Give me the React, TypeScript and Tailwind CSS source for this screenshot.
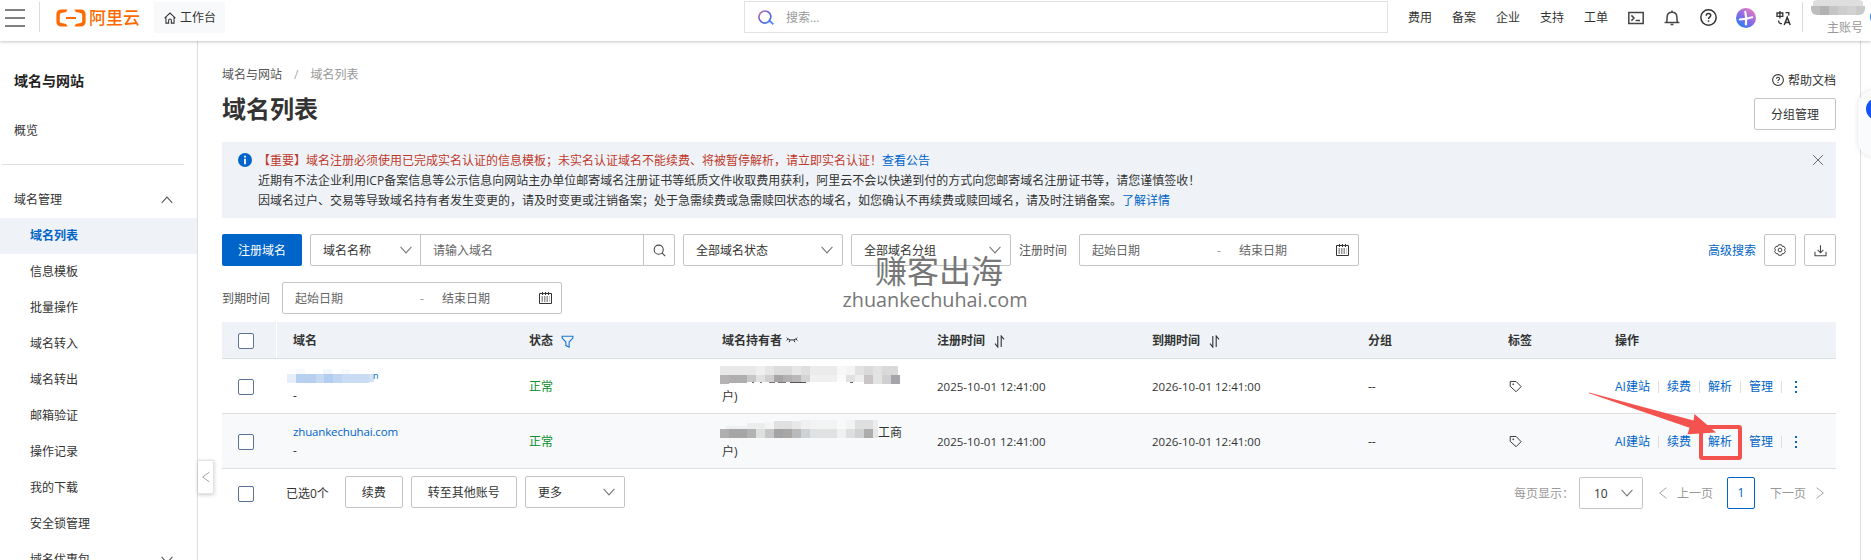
import type { ReactNode } from 'react';

const navLinks = ['费用', '备案', '企业', '支持', '工单'];

const sideItems = [
  '域名列表',
  '信息模板',
  '批量操作',
  '域名转入',
  '域名转出',
  '邮箱验证',
  '操作记录',
  '我的下载',
  '安全锁管理',
];

const rowActions = ['AI建站', '续费', '解析', '管理'];

const tableCols = 'grid grid-cols-[55px_236px_193px_215px_215px_216px_140px_107px_1fr] items-center [&>*]:pt-[2px]';

type Block = [x: number, y: number, w: number, h: number, fill: string];

// Pixelated strips that hide private values
const domainMask: Block[] = [
  [9, 0, 9, 5, '#f6f9fd'],
  [36, 0, 9, 5, '#f3f7fc'],
  [54, 0, 9, 5, '#f6f9fd'],
  [0, 5, 9, 9, '#e6eefa'],
  [9, 5, 20, 9, '#b8d0f0'],
  [29, 5, 8, 9, '#c6d9f2'],
  [37, 5, 9, 9, '#b2cdf0'],
  [46, 5, 9, 9, '#bfd5f2'],
  [55, 5, 27, 9, '#c9dcf4'],
  [82, 5, 5, 8, '#d2e2f6'],
];

const ownerMaskA: Block[] = [
  [0, 2, 36, 9, '#e8e8e8'],
  [36, 2, 9, 9, '#efefef'],
  [45, 2, 9, 9, '#e6e6e6'],
  [54, 2, 18, 9, '#dcdcdc'],
  [72, 2, 9, 9, '#e6e6e6'],
  [81, 2, 9, 9, '#dedede'],
  [90, 2, 27, 9, '#ebebeb'],
  [117, 2, 9, 9, '#f7f7f7'],
  [126, 2, 9, 9, '#f4f4f4'],
  [135, 2, 9, 9, '#e2e2e2'],
  [144, 2, 9, 9, '#dadada'],
  [153, 2, 9, 9, '#e2e2e2'],
  [162, 2, 16, 9, '#d9d9d9'],
  [0, 11, 9, 9, '#b5b3b3'],
  [9, 11, 18, 8, '#b0afb0'],
  [27, 11, 9, 7, '#c8c6c6'],
  [36, 11, 9, 7, '#e2e2e2'],
  [45, 11, 9, 7, '#cfcfcf'],
  [54, 11, 9, 7, '#a7a5a6'],
  [63, 11, 9, 7, '#b2b0b0'],
  [72, 11, 9, 7, '#bab8b8'],
  [81, 11, 9, 7, '#d5d4d4'],
  [90, 11, 27, 7, '#f0f0f0'],
  [117, 11, 9, 6, '#fafafa'],
  [126, 11, 9, 7, '#e4e2e0'],
  [135, 11, 9, 7, '#eeeeee'],
  [144, 11, 9, 9, '#c9c5c6'],
  [153, 11, 9, 9, '#e3e3e3'],
  [162, 11, 9, 9, '#d0cfd1'],
  [171, 11, 9, 9, '#a6a5a9'],
  // stroke ends left below the strip
  [32, 18, 2, 1, '#666666'],
  [40, 18, 2, 1, '#777777'],
  [49, 18, 6, 1, '#777777'],
  [58, 18, 8, 1, '#777777'],
  [70, 18, 16, 1, '#555555'],
  [130, 18, 3, 1, '#666666'],
];

const ownerMaskB: Block[] = [
  [6, 8, 21, 3, '#eff0f1'],
  [27, 5, 18, 6, '#eceded'],
  [45, 4, 9, 7, '#f3f4f4'],
  [54, 3, 18, 8, '#e0e0e0'],
  [72, 3, 9, 8, '#e8e8e8'],
  [81, 2, 9, 9, '#f0f0f0'],
  [90, 2, 27, 9, '#f2f3f3'],
  [126, 2, 9, 9, '#f2f3f3'],
  [135, 2, 18, 9, '#dedfdf'],
  [153, 2, 5, 9, '#eceded'],
  [0, 11, 9, 9, '#b0aeae'],
  [9, 11, 18, 9, '#a6a6a7'],
  [27, 11, 9, 9, '#b3b2b2'],
  [36, 11, 9, 9, '#dedfdf'],
  [45, 11, 9, 9, '#c6c6c8'],
  [54, 11, 9, 9, '#a3a3a5'],
  [63, 11, 9, 9, '#a9a6a6'],
  [72, 11, 9, 9, '#b9babb'],
  [81, 11, 9, 9, '#cfd2d4'],
  [90, 11, 27, 9, '#dfe1e2'],
  [117, 11, 9, 9, '#eff0f0'],
  [126, 11, 9, 9, '#dddede'],
  [135, 11, 9, 9, '#d0d1d2'],
  [144, 11, 9, 9, '#adabab'],
  [153, 11, 5, 9, '#e6e7e8'],
];

const accountMask: Block[] = [
  [2, 0, 50, 6, '#dedede'],
  [0, 6, 9, 9, '#bdbdbd'],
  [9, 6, 9, 9, '#b2b2b4'],
  [18, 6, 9, 9, '#c5c5c5'],
  [27, 6, 9, 9, '#cdcdcd'],
  [36, 6, 9, 9, '#d2d2d2'],
  [45, 6, 9, 9, '#cacaca'],
];

function Mask({ blocks, w, h, className = '' }: { blocks: Block[]; w: number; h: number; className?: string }) {
  return (
    <svg width={w} height={h} className={`shrink-0 ${className}`} shapeRendering="crispEdges" aria-hidden="true">
      {blocks.map(([x, y, bw, bh, fill], i) => (
        <rect key={i} x={x} y={y} width={bw} height={bh} fill={fill} />
      ))}
    </svg>
  );
}

function Icon({
  size = 16,
  sw = 1.2,
  className = '',
  children,
}: {
  size?: number;
  sw?: number;
  className?: string;
  children: ReactNode;
}) {
  return (
    <svg
      width={size}
      height={size}
      viewBox="0 0 16 16"
      fill="none"
      stroke="currentColor"
      strokeWidth={sw}
      className={`shrink-0 ${className}`}
      aria-hidden="true"
    >
      {children}
    </svg>
  );
}

function ChevronDown({ className = '' }: { className?: string }) {
  return (
    <Icon size={14} className={className}>
      <path d="M1.8 4.5 8 11.3l6.2-6.8" />
    </Icon>
  );
}

function HelpIcon({ size }: { size: number }) {
  return (
    <Icon size={size} sw={1.4}>
      <circle cx="8" cy="8" r="7.2" />
      <path d="M5.9 6.4c0-1.3.9-2.1 2.1-2.1s2.1.8 2.1 1.9c0 1.4-2.1 1.6-2.1 3.2M8 10.7v1.4" />
    </Icon>
  );
}

function SortIcon() {
  return (
    <svg width="11" height="13" viewBox="0 0 11 13" fill="none" stroke="#333" strokeWidth="1.1" className="ml-[9px]" aria-hidden="true">
      <path d="M3.8 1v11L1 8.6M7.2 12V1L10 4.4" />
    </svg>
  );
}

function Checkbox() {
  return <span className="block size-4 rounded-[2px] border border-[#5b7495] bg-white" />;
}

function Select({ label, width }: { label: string; width: string }) {
  return (
    <div className={`flex h-8 shrink-0 items-center justify-between rounded-[2px] border border-[#c3c5c6] bg-white pl-3 pr-2 ${width}`}>
      <span className="pt-[2px]">{label}</span>
      <ChevronDown className="text-[#777]" />
    </div>
  );
}

function DateRange() {
  return (
    <div className="flex h-8 w-[280px] items-center rounded-[2px] border border-[#c3c5c6] bg-white pl-3 text-[#666]">
      <span className="w-[125px] pt-[2px]">起始日期</span>
      <span className="w-[22px] pt-[2px] text-[#999]">-</span>
      <span className="pt-[2px]">结束日期</span>
      <svg width="13" height="13" viewBox="0 0 13 13" className="ml-auto mr-[9px] text-[#333]" aria-hidden="true">
        <path d="M.5 1.5h12v10H.5zM3.5 0v3M6.5 0v3M9.5 0v3" fill="none" stroke="currentColor" />
        <path d="M2.5 5h8M2.500 7h8M2.500 9h8" stroke="currentColor" strokeWidth="1" strokeDasharray="1.500 1" />
      </svg>
    </div>
  );
}

function Header() {
  return (
    <header className="relative z-10 flex h-[41px] shrink-0 bg-white pb-[6px] shadow-[0_1px_3px_rgba(0,0,0,0.22)]">
      <div className="ml-[5px] flex w-5 flex-col justify-center gap-[6px]">
        <span className="h-[2px] bg-[#808080]" />
        <span className="h-[2px] bg-[#808080]" />
        <span className="h-[2px] bg-[#808080]" />
      </div>
      <div className="ml-[14px] mt-[2px] h-[30px] w-px bg-[#dcdcdc]" />

      {/* Logo */}
      <div className="ml-4 flex items-center text-[#ff6a00]">
        <svg width="30" height="18" viewBox="0 0 30 18" fill="none" aria-hidden="true">
          <path d="M11.6.4H5.2C2.4.4.4 2.3.4 5v8c0 2.7 2 4.6 4.8 4.6h6.4l-1.5-2.7-4.7-.9c-1-.2-1.6-.9-1.6-1.8V5.8c0-.9.6-1.6 1.6-1.8l4.7-.9z" fill="currentColor" />
          <path d="M18.4.4h6.4c2.8 0 4.8 1.9 4.8 4.6v8c0 2.7-2 4.6-4.8 4.6h-6.4l1.5-2.7 4.7-.9c1-.2 1.6-.9 1.6-1.8V5.8c0-.9-.6-1.6-1.6-1.8l-4.7-.9z" fill="currentColor" />
          <path d="M10 8h10v2H10z" fill="currentColor" />
        </svg>
        <span className="ml-[3px] text-[17px] font-medium leading-none">阿里云</span>
      </div>

      <div className="ml-[14px] mt-[2px] flex h-[31px] w-[71px] items-center bg-[#f7f9fa] pl-[10px]">
        <Icon size={12} sw={1.4}>
          <path d="M.8 8.2 8 1.4l7.2 6.8M2.6 7v7.8h3.6V11c0-1 .8-1.8 1.8-1.8s1.8.8 1.8 1.8v3.8h3.6V7" />
        </Icon>
        <span className="ml-1">工作台</span>
      </div>

      <div className="ml-auto mt-px flex h-8 w-[644px] items-center border border-[#dfe2e5] pl-[13px] text-[#999]">
        <svg width="16" height="16" viewBox="0 0 16 16" fill="none" aria-hidden="true">
          <defs>
            <linearGradient id="searchStroke" x1="0" y1="0" x2="1" y2="1">
              <stop offset="0" stopColor="#d0709a" />
              <stop offset="0.45" stopColor="#5a5fe0" />
              <stop offset="1" stopColor="#3f8cff" />
            </linearGradient>
          </defs>
          <path d="M11.8 11.6A6 6 0 1 1 12.9 7.2c0 1.7-.5 3.2-1.6 4.2l4 4" stroke="url(#searchStroke)" strokeWidth="1.7" />
        </svg>
        <span className="ml-3 pt-px">搜索...</span>
      </div>

      <nav className="ml-5 flex items-center gap-5 text-[#333]">
        {navLinks.map((link) => (
          <a key={link} href="#">
            {link}
          </a>
        ))}
        <Icon sw={1.5} className="text-[#444]">
          <path d="M.8 2.6h14.4v10.8H.8zM3.4 5.4 6 8l-2.6 2.6M7.6 10.6H12" />
        </Icon>
        <Icon sw={1.5} className="text-[#444]">
          <path d="M.6 12.6h14.8M2.4 12.4c.7-1 .7-2.4.7-5C3.1 4.3 5 2.2 8 2.2s4.9 2.1 4.9 5.2c0 2.6 0 4 .7 5M6.6 14.6h2.8M8 .6v1.6" />
        </Icon>
        <HelpIcon size={17} />
        <svg width="20" height="20" viewBox="0 0 20 20" className="-ml-px" aria-hidden="true">
          <defs>
            <linearGradient id="copilot" x1="0.2" y1="0.9" x2="0.8" y2="0.1">
              <stop offset="0" stopColor="#2f7cf6" />
              <stop offset="0.5" stopColor="#8d6ae8" />
              <stop offset="1" stopColor="#e07ac0" />
            </linearGradient>
          </defs>
          <circle cx="10" cy="10" r="10" fill="url(#copilot)" />
          <path d="M9.3 3.8c.9 3.6 1 8.8.6 12.6" stroke="#fff" strokeWidth="2.2" strokeLinecap="round" fill="none" />
          <path d="M3.8 11.4c3.2-.2 8.4-1 12.4-2.2" stroke="#fff" strokeWidth="2" strokeLinecap="round" fill="none" />
        </svg>
        <Icon sw={1.3}>
          <path d="M1 3h5.8v3.4H1zM3.9 1v7.6M9.6 2.6h3.2v3M2.6 10.4c0 2 .8 3.3 3.4 3.3" />
          <path d="m8.2 15 3-7.6 3 7.6M9.3 12.6h3.9" strokeWidth="1.5" />
        </Icon>
      </nav>

      <div className="ml-[10px] mt-[2px] h-[30px] w-px bg-[#dcdcdc]" />
      <div className="ml-2 mr-[6px] flex w-[54px] flex-col items-end">
        <Mask blocks={accountMask} w={54} h={15} className="rounded-[6px]" />
        <span className="mr-[2px] mt-[4px] leading-[18px] text-[#999]">主账号</span>
      </div>
    </header>
  );
}

function Sidebar() {
  return (
    <aside className="relative w-[198px] shrink-0 border-r border-[#dcdee0]">
      <h2 className="pl-[14px] pt-[30px] text-sm font-bold leading-5 text-[#222]">域名与网站</h2>
      <a href="#" className="mt-[30px] block pl-[14px] leading-5">
        概览
      </a>
      <div className="ml-[2px] mr-[13px] mt-[23px] h-px bg-[#dcdee0]" />
      <div className="mt-[17px] flex h-9 items-center justify-between pl-[14px] pr-[23px]">
        <span>域名管理</span>
        <Icon size={14} className="text-[#555]">
          <path d="m2 11.2 6-6.6 6 6.6" />
        </Icon>
      </div>
      <ul>
        {sideItems.map((item, i) => (
          <li
            key={item}
            className={`flex h-9 items-center pl-[30px] ${i === 0 ? 'bg-[#eff3f8] font-bold text-[#0064c8]' : ''}`}
          >
            {item}
          </li>
        ))}
        <li className="flex h-9 items-center justify-between pl-[30px] pr-[23px]">
          域名优惠包
          <ChevronDown className="text-[#555]" />
        </li>
      </ul>

      {/* Collapse handle */}
      <button className="absolute left-[198px] top-[419px] flex h-[34px] w-4 items-center justify-center border border-l-0 border-[#e3e4e6] bg-white text-[#999] shadow-[0_1px_4px_rgba(0,0,0,0.2)]">
        <Icon size={12}>
          <path d="M12.5 1.5 3.5 8l9 6.5" />
        </Icon>
      </button>
    </aside>
  );
}

function Notice() {
  return (
    <section className="mt-[13px] flex h-[76px] bg-[#eff3f8] pl-4 pr-3 pt-[9px] text-[#333]">
      <svg width="14" height="14" viewBox="0 0 14 14" className="mt-[2px] shrink-0" aria-hidden="true">
        <circle cx="7" cy="7" r="7" fill="#0064c8" />
        <path d="M7 2.7v1.7M7 5.7v5.5" stroke="#fff" strokeWidth="1.8" />
      </svg>
      <div className="ml-[6px] leading-5">
        <p className="text-[#c03a2b]">
          【重要】域名注册必须使用已完成实名认证的信息模板；未实名认证域名不能续费、将被暂停解析，请立即实名认证！
          <a href="#" className="text-[#0064c8]">查看公告</a>
        </p>
        <p>近期有不法企业利用ICP备案信息等公示信息向网站主办单位邮寄域名注册证书等纸质文件收取费用获利，阿里云不会以快递到付的方式向您邮寄域名注册证书等，请您谨慎签收！</p>
        <p>
          因域名过户、交易等导致域名持有者发生变更的，请及时变更或注销备案；处于急需续费或急需赎回状态的域名，如您确认不再续费或赎回域名，请及时注销备案。
          <a href="#" className="text-[#0064c8]">了解详情</a>
        </p>
      </div>
      <Icon size={12} sw={1.3} className="ml-auto mt-[3px] text-[#666]">
        <path d="m1.5 1.5 13 13M14.5 1.5l-13 13" />
      </Icon>
    </section>
  );
}

function Toolbar() {
  return (
    <div className="mt-4">
      <div className="flex h-8 items-center">
        <button className="h-8 w-20 rounded-[2px] bg-[#0064c8] pt-[2px] text-white">注册域名</button>
        <div className="ml-2 flex h-8 w-[365px] rounded-[2px] border border-[#c3c5c6]">
          <div className="flex w-[110px] items-center justify-between border-r border-[#c3c5c6] pl-3 pr-[7px]">
            <span className="pt-[2px]">域名名称</span>
            <ChevronDown className="text-[#777]" />
          </div>
          <span className="flex flex-1 items-center pl-3 pt-[2px] text-[#666]">请输入域名</span>
          <span className="flex w-[31px] items-center justify-center border-l border-[#c3c5c6]">
            <Icon size={13} sw={1.3} className="text-[#444]">
              <circle cx="7" cy="7" r="5.6" />
              <path d="m11 11 4 4" />
            </Icon>
          </span>
        </div>
        <div className="ml-2 flex gap-2">
          <Select label="全部域名状态" width="w-[160px]" />
          <Select label="全部域名分组" width="w-[160px]" />
        </div>
        <span className="ml-2 mr-3 pt-[2px] text-[#555]">注册时间</span>
        <DateRange />
        <a href="#" className="ml-auto pt-[2px] text-[#0064c8]">
          高级搜索
        </a>
        <button className="ml-2 flex size-8 items-center justify-center rounded-[2px] border border-[#c3c5c6]">
          <Icon size={12} sw={1.2}>
            <path d="M6 1h4l.9 2.200 2.400-.1 1.900 3.200L13.900 8l1.300 1.700-1.900 3.200-2.400-.1L10 15H6l-.9-2.200-2.400.1L.8 9.700 2.100 8 .8 6.300l1.900-3.200 2.400.1z" />
            <circle cx="8" cy="8" r="2.5" />
          </Icon>
        </button>
        <button className="ml-2 flex size-8 items-center justify-center rounded-[2px] border border-[#c3c5c6]">
          <Icon size={13} sw={1.3} className="text-[#444]">
            <path d="M8 1.5v9M4.5 7.3 8 10.8l3.5-3.5M1.2 9.5v5h13.6v-5" />
          </Icon>
        </button>
      </div>
      <div className="mt-4 flex h-8 items-center">
        <span className="mr-3 pt-[2px] text-[#555]">到期时间</span>
        <DateRange />
      </div>
    </div>
  );
}

function RowActions() {
  return (
    <div className="flex items-center text-[#0064c8]">
      {rowActions.map((label) => (
        <span key={label} className="flex items-center">
          {label}
          <i className="mx-2 h-3 w-px bg-[#dcdee0]" />
        </span>
      ))}
      <span className="ml-[5px] flex flex-col gap-[3px]">
        <i className="size-[2px] bg-[#0064c8]" />
        <i className="size-[2px] bg-[#0064c8]" />
        <i className="size-[2px] bg-[#0064c8]" />
      </span>
    </div>
  );
}

function DomainRow({ domain, owner, tinted }: { domain: ReactNode; owner: ReactNode; tinted?: boolean }) {
  return (
    <div className={`${tableCols} h-[55px] border-b border-[#dcdee0] leading-[18px] ${tinted ? 'bg-[#f7f9fb]' : ''}`}>
      <div className="pl-4">
        <Checkbox />
      </div>
      <div className="pl-4">
        <div className="-mt-px mb-px h-[18px] text-[#0064c8]">{domain}</div>
        <div>-</div>
      </div>
      <div className="pl-4 text-[#0a8f2c]">正常</div>
      <div className="pl-4">
        <div className="flow-root h-[20px]">{owner}</div>
        <div>户)</div>
      </div>
      <div className="pl-4 text-[11.5px]">2025-10-01 12:41:00</div>
      <div className="pl-4 text-[11.5px]">2026-10-01 12:41:00</div>
      <div className="pl-4">--</div>
      <div className="pl-[17px]">
        <Icon size={13} sw={1.2} className="-mt-[2px]">
          <path d="M1.5 1.8h7.2l6.2 6.4-6.2 6.2-7.2-6.6z" />
          <circle cx="5.2" cy="5.2" r="0.6" />
        </Icon>
      </div>
      <div className="pl-4">
        <RowActions />
      </div>
    </div>
  );
}

function DomainTable() {
  return (
    <div className="mt-2">
      <div className={`${tableCols} h-[37px] border-b border-[#dcdfe3] bg-[#eff3f8] font-bold`}>
        <div className="flex h-9 items-center border-r border-white pl-4">
          <Checkbox />
        </div>
        <div className="pl-4">域名</div>
        <div className="flex items-center pl-4">
          状态
          <Icon size={13} sw={1.4} className="ml-2 text-[#1f74d0]">
            <path d="M1.4 1.5h13.2v2.3L10 8.6v6.2L6 13V8.6L1.4 3.8z" />
          </Icon>
        </div>
        <div className="flex items-center pl-4">
          域名持有者
          <svg width="12" height="6" viewBox="0 0 12 6" fill="none" stroke="#333" className="-mt-[2px] ml-1" aria-hidden="true">
            <path d="M.8.6C2 2.2 3.7 3 6 3s4-.8 5.2-2.4M4 3l-.8 2.2M8 3l.8 2.2M1.9 2 .6 3.6M10.1 2l1.3 1.6" />
          </svg>
        </div>
        <div className="flex items-center pl-4">
          注册时间
          <SortIcon />
        </div>
        <div className="flex items-center pl-4">
          到期时间
          <SortIcon />
        </div>
        <div className="pl-4">分组</div>
        <div className="pl-4">标签</div>
        <div className="pl-4">操作</div>
      </div>

      <DomainRow
        domain={
          <span className="-ml-[6px] flex">
            <Mask blocks={domainMask} w={87} h={14} className="mt-px" />
            <span className="-ml-px -mt-px text-[9px]">n</span>
          </span>
        }
        owner={<Mask blocks={ownerMaskA} w={180} h={20} className="-ml-[2px] -mt-[4px] rounded-tr-[8px]" />}
      />
      <DomainRow
        tinted
        domain={<span className="text-[11.5px] tracking-[-0.15px]">zhuankechuhai.com</span>}
        owner={
          <span className="-ml-[2px] flex">
            <Mask blocks={ownerMaskB} w={158} h={20} className="-mt-[5px]" />
            <span className="pt-px">工商</span>
          </span>
        }
      />
    </div>
  );
}

function TableFooter() {
  return (
    <div className="mt-[7px] flex h-8 items-center pl-4">
      <div className="flex items-center pt-1">
        <Checkbox />
        <span className="ml-8">已选0个</span>
      </div>
      <button className="ml-4 h-8 w-[58px] rounded-[2px] border border-[#c3c5c6] pt-[2px]">续费</button>
      <button className="ml-2 mr-2 h-8 w-[106px] rounded-[2px] border border-[#c3c5c6] pt-[2px]">转至其他账号</button>
      <Select label="更多" width="w-[100px]" />

      {/* Pagination */}
      <div className="ml-auto mr-[10px] flex items-center pt-[2px] text-[#999]">
        <span className="mr-[5px] pt-[2px]">每页显示：</span>
        <div className="flex h-8 w-16 items-center justify-between rounded-[2px] border border-[#c3c5c6] pl-[14px] pr-2 text-[#333]">
          <span className="pt-[2px]">10</span>
          <ChevronDown className="text-[#777]" />
        </div>
        <Icon size={12} className="ml-[14px] mr-2">
          <path d="M12.5 1 3.5 8l9 7" />
        </Icon>
        <span className="pt-[2px]">上一页</span>
        <span className="ml-[14px] mr-[15px] flex h-8 w-7 items-center justify-center rounded-[2px] border border-[#0064c8] text-[#0064c8]">
          1
        </span>
        <span className="pt-[2px]">下一页</span>
        <Icon size={12} className="ml-2">
          <path d="m3.5 1 9 7-9 7" />
        </Icon>
      </div>
    </div>
  );
}

export default function App() {
  return (
    <div className="relative flex h-[560px] w-[1871px] flex-col overflow-hidden bg-white font-['Open_Sans','Noto_Sans_CJK_SC',sans-serif] text-xs text-[#333]">
      <Header />
      <div className="flex min-h-0 flex-1">
        <Sidebar />
        <main className="w-[1663px] shrink-0 border-r border-[#dcdee0] pl-6 pr-6">
          <div className="flex h-[88px] justify-between">
            <div>
              <div className="mt-6 flex leading-5">
                <span className="text-[#555]">域名与网站</span>
                <span className="mx-3 text-[#aaa]">/</span>
                <span className="text-[#999]">域名列表</span>
              </div>
              <h1 className="mt-2 text-2xl font-bold leading-8 text-[#333]">域名列表</h1>
            </div>
            <div className="flex flex-col items-end">
              <a href="#" className="mt-[29px] flex h-5 shrink-0 items-center gap-1">
                <HelpIcon size={12} />
                <span className="pt-px">帮助文档</span>
              </a>
              <button className="mt-[8px] h-8 w-[82px] shrink-0 rounded-[2px] border border-[#c3c5c6] pt-[2px]">分组管理</button>
            </div>
          </div>
          <Notice />
          <Toolbar />
          <DomainTable />
          <TableFooter />
        </main>
      </div>

      {/* Floating assistant tab */}
      <div className="absolute left-[1858px] top-[90px] h-[67px] w-10 rounded-[16px] bg-[#fafbfc] shadow-[0_0_5px_rgba(0,0,0,0.12)]">
        <span className="absolute left-2 top-2 size-[22px] rounded-full bg-[#1454f5]" />
      </div>
      <span className="absolute left-[1870px] top-[8px] z-20 h-[18px] w-10 rounded-full bg-[#2f7df6]" />

      {/* Watermark */}
      <div className="pointer-events-none absolute left-[838px] top-[252px] flex w-[194px] flex-col items-center text-[#777]">
        <span className="ml-[8px] text-[32px] leading-[38px]">赚客出海</span>
        <span className="text-[19.8px] leading-[20px]">zhuankechuhai.com</span>
      </div>

      {/* Pointer to the DNS action */}
      <div className="pointer-events-none absolute left-[1699px] top-[425px] h-[35px] w-[43px] rounded-[3px] border-4 border-[#f4524f]" />
      <svg width="130" height="44" className="pointer-events-none absolute left-[1588px] top-[392px]" aria-hidden="true">
        <path d="M1 .5 105.5 28.5 106.5 22 128 40.5 99.5 42.3 101.5 35.8 1 1.3z" fill="#f4524f" />
      </svg>
    </div>
  );
}
